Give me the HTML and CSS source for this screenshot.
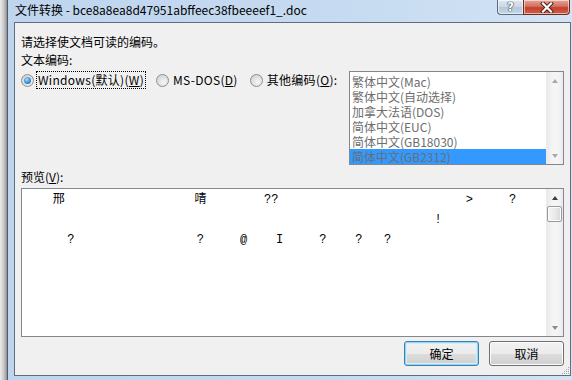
FILE: index.html
```html
<!DOCTYPE html>
<html lang="zh-CN">
<head>
    <meta charset="UTF-8">
    <meta name="viewport" content="width=device-width, initial-scale=1.0">
    <title>文件转换</title>
    <link rel="stylesheet" href="styles.css">
</head>
<body>
    <div class="desk-shadow"></div>
    <div class="window">
        <div class="titlebar">
            <span class="title">文件转换 - bce8a8ea8d47951abffeec38fbeeeef1_.doc</span>
            <div class="caption-buttons">
                <div class="cap-btn help">?</div>
                <div class="cap-btn close">
                    <svg width="14" height="11" viewBox="0 0 14 11">
                        <path d="M3 1.5 L11 9.5 M11 1.5 L3 9.5" stroke="#4a1a16" stroke-width="4" stroke-linecap="square"/>
                        <path d="M3 1.5 L11 9.5 M11 1.5 L3 9.5" stroke="#ffffff" stroke-width="2.2" stroke-linecap="square"/>
                    </svg>
                </div>
            </div>
        </div>

        <div class="client">
            <div class="prompt">请选择使文档可读的编码。</div>
            <div class="group-label">文本编码:</div>

            <div class="encoding-row">
                <div class="radios">
                    <label class="radio checked focus"><span class="dot"></span><span class="text">Windows(默认)(<u>W</u>)</span></label>
                    <label class="radio"><span class="dot"></span><span class="text">MS-DOS(<u>D</u>)</span></label>
                    <label class="radio"><span class="dot"></span><span class="text">其他编码(<u>O</u>):</span></label>
                </div>
                <div class="listbox">
                    <ul class="items">
                        <li>繁体中文(Mac)</li>
                        <li>繁体中文(自动选择)</li>
                        <li>加拿大法语(DOS)</li>
                        <li>简体中文(EUC)</li>
                        <li>简体中文(GB18030)</li>
                        <li class="selected">简体中文(GB2312)</li>
                    </ul>
                    <div class="scrollbar disabled">
                        <span class="arrow up"></span>
                        <span class="track"></span>
                        <span class="arrow down"></span>
                    </div>
                </div>
            </div>

            <div class="preview-label">预览(<u>V</u>):</div>
            <div class="preview">
<pre class="preview-text">    邢                  啨        ??                          &gt;     ?
                                                         !
      ?                 ?     @    I     ?    ?   ?</pre>
                <div class="scrollbar">
                    <span class="arrow up"></span>
                    <span class="thumb"></span>
                    <span class="track"></span>
                    <span class="arrow down"></span>
                </div>
            </div>

            <div class="buttons">
                <button class="btn default">确定</button>
                <button class="btn">取消</button>
            </div>

            <!-- 右下角的拖动手柄 -->
            <svg class="grip" width="10" height="10" viewBox="0 0 10 10">
                <g fill="#a3a3a3">
                    <rect x="8" y="2" width="1" height="1"/>
                    <rect x="6" y="4" width="1" height="1"/>
                    <rect x="8" y="4" width="1" height="1"/>
                    <rect x="4" y="6" width="1" height="1"/>
                    <rect x="6" y="6" width="1" height="1"/>
                    <rect x="8" y="6" width="1" height="1"/>
                    <rect x="2" y="8" width="1" height="1"/>
                    <rect x="4" y="8" width="1" height="1"/>
                    <rect x="6" y="8" width="1" height="1"/>
                    <rect x="8" y="8" width="1" height="1"/>
                </g>
            </svg>
        </div>
    </div>
</body>
</html>
```

FILE: styles.css
```css
body {
    margin: 0;
    width: 572px;
    height: 380px;
    display: flex;
    overflow: hidden;
    font-family: "Noto Sans CJK SC", sans-serif;
    font-size: 12px;
    color: #000;
    background: #c8c8c8;
}
.desk-shadow {
    width: 7px;
    background: linear-gradient(to right, #ececec, #c4c4c4 60%, #8e8e8e);
}
/* 窗口外框 (Aero 浅蓝色) */
.window {
    flex: 1;
    display: flex;
    flex-direction: column;
    border-left: 1px solid #4e5b6a;
    padding: 0 1px 4px 6px;
    background: linear-gradient(to right, #bfd5ee, #c6dbf1 60%, #d3e3f4);
}
.titlebar {
    height: 22px;
    display: flex;
    align-items: flex-start;
}
.title {
    padding: 3px 0 0 1px;
    line-height: 14px;
    white-space: nowrap;
}
.caption-buttons {
    margin-left: auto;
    margin-right: 1px;
    display: flex;
}
.cap-btn {
    height: 14px;
    border: 1px solid #5c6b7e;
    border-top: none;
    display: flex;
    align-items: center;
    justify-content: center;
    box-shadow: inset 0 0 0 1px rgba(255, 255, 255, 0.55);
}
.help {
    width: 25px;
    border-right: none;
    border-radius: 0 0 0 4px;
    background: linear-gradient(#dfe8f2, #c9d6e5 50%, #b6c7db 51%, #c7d6e7);
    color: #fff;
    font-family: "DejaVu Sans", sans-serif;
    font-weight: bold;
    font-size: 12px;
    line-height: 14px;
    text-shadow: 0 0 1px #2c3a4c, 0 0 1px #2c3a4c, 0 0 1px #2c3a4c;
}
.close {
    width: 45px;
    border-color: #6b2b25;
    border-radius: 0 0 4px 0;
    background: linear-gradient(#e8a596, #d4705f 45%, #c3412f 55%, #d15d45);
}

/* 对话框客户区 */
.client {
    flex: 1;
    position: relative;
    display: flex;
    flex-direction: column;
    border: 1px solid #5f6d7e;
    background: #f0f0f0;
    padding: 11px 6px 0;
}
.prompt, .group-label, .preview-label {
    line-height: 16px;
}
.group-label {
    margin-top: 2px;
}
.encoding-row {
    margin-top: 3px;
    display: flex;
    align-items: flex-start;
}
.radios {
    display: flex;
    gap: 10px;
}
.radio {
    display: flex;
    align-items: center;
    height: 18px;
}
.dot {
    position: relative;
    width: 11px;
    height: 11px;
    margin-right: 2px;
    border: 1px solid #8f8f8f;
    border-radius: 50%;
    background: radial-gradient(circle at 60% 65%, #f6f6f6, #dcdcdc 60%, #c9c9c9);
}
.checked .dot::after {
    content: "";
    position: absolute;
    left: 2px;
    top: 2px;
    width: 7px;
    height: 7px;
    border-radius: 50%;
    background: radial-gradient(circle at 40% 35%, #a6dcff, #3a8fd8 55%, #1c5a9e);
}
.text {
    border: 1px dotted transparent;
    padding: 0 1px;
    line-height: 16px;
    letter-spacing: 0.3px;
    white-space: nowrap;
}
.focus .text {
    border-color: #000;
}

.listbox {
    margin-left: auto;
    width: 213px;
    height: 92px;
    display: flex;
    border: 1px solid #828790;
    background: #fff;
}
.items {
    flex: 1;
    list-style: none;
    margin: 0;
    padding: 2px 0 0;
}
.items li {
    height: 15px;
    line-height: 15px;
    padding-left: 2px;
    color: #6d6d6d;
    white-space: nowrap;
}
.items .selected {
    background: #3399ff;
}

/* 滚动条 */
.scrollbar {
    width: 17px;
    display: flex;
    flex-direction: column;
    align-items: center;
    background: linear-gradient(to right, #e8e8e8, #f5f5f5 40%, #f5f5f5 70%, #ebebeb);
}
.arrow {
    width: 17px;
    height: 17px;
    display: flex;
    align-items: center;
    justify-content: center;
}
.arrow::after {
    content: "";
    border-left: 3.5px solid transparent;
    border-right: 3.5px solid transparent;
}
.up::after {
    border-bottom: 4px solid #3c3c3c;
}
.down::after {
    border-top: 4px solid #8a8a8a;
}
.disabled .up::after {
    border-bottom-color: #a8a8a8;
}
.disabled .down::after {
    border-top-color: #a8a8a8;
}
.track {
    flex: 1;
}
.thumb {
    width: 13px;
    height: 14px;
    border: 1px solid #9a9a9a;
    border-radius: 2px;
    background: linear-gradient(to right, #f6f6f6, #eaeaea 50%, #d8d8d8);
    box-shadow: inset 0 0 0 1px #fbfbfb;
}

.preview-label {
    margin-top: 4px;
}
.preview {
    margin-top: 3px;
    height: 147px;
    display: flex;
    border: 1px solid #828790;
    background: #fff;
}
.preview-text {
    flex: 1;
    margin: 0;
    padding: 1px 0 0 2px;
    font-family: "Liberation Mono", "Noto Sans CJK SC", monospace;
    font-size: 12px;
    line-height: 20px;
    white-space: pre;
    overflow: hidden;
}

.buttons {
    margin-top: 4px;
    display: flex;
    justify-content: flex-end;
    gap: 10px;
}
.btn {
    width: 75px;
    height: 25px;
    padding: 0;
    font: inherit;
    color: #000;
    border: 1px solid #707070;
    border-radius: 3px;
    background: linear-gradient(#f2f2f2, #ebebeb 50%, #dddddd 51%, #cfcfcf);
    box-shadow: inset 0 0 0 1px #fcfcfc;
}
.btn.default {
    border-color: #3c7fb1;
    box-shadow: inset 0 0 0 1px #92d6f5, inset 0 0 0 2px #d6eef9;
}
.grip {
    position: absolute;
    right: 0;
    bottom: 0;
}
```
